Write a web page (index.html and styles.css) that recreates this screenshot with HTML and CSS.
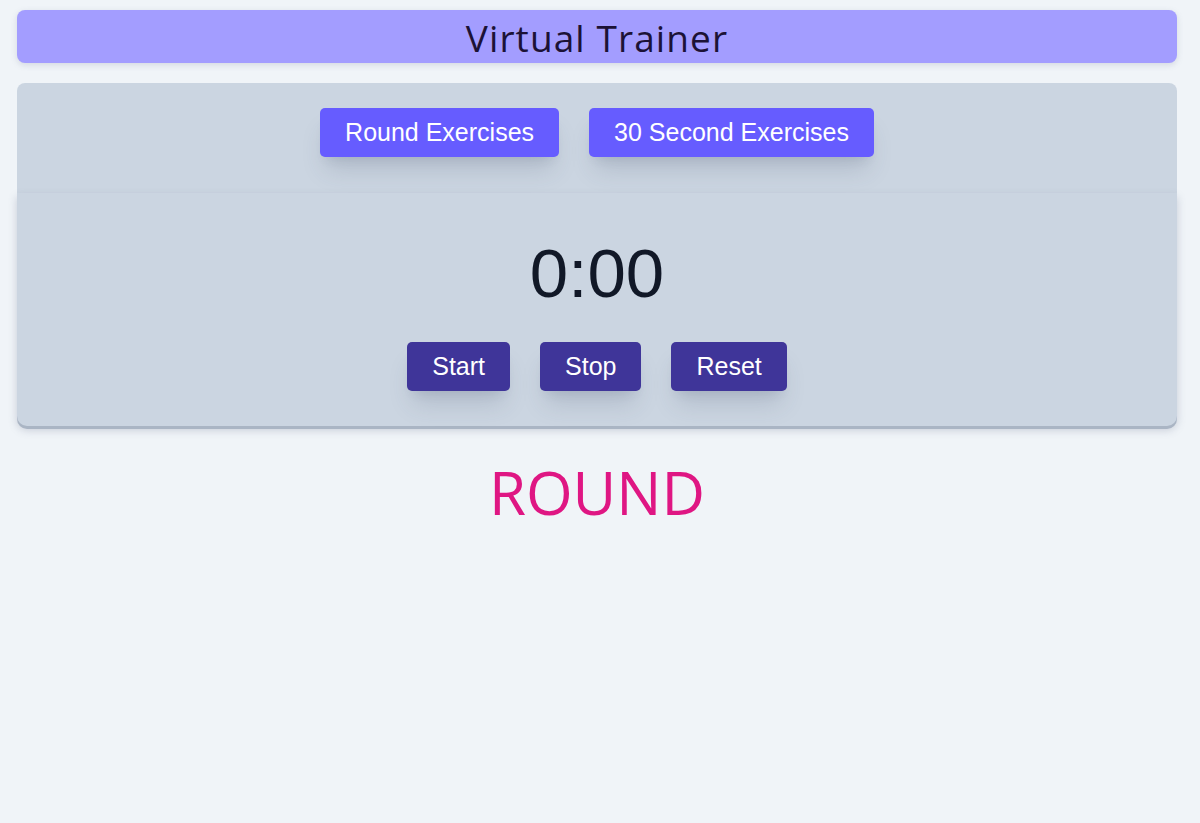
FILE: index.html
```html
<!DOCTYPE html>
<html lang="en">
<head>
<meta charset="utf-8">
<title>Virtual Trainer</title>
<link rel="stylesheet" href="styles.css">
</head>
<body>
<div class="app">
  <header class="header">
    <h1 class="title">Virtual Trainer</h1>
  </header>
  <section class="panel">
    <nav class="modes">
      <button class="btn btn-mode">Round Exercises</button>
      <button class="btn btn-mode">30 Second Exercises</button>
    </nav>
    <div class="timer-card">
      <div class="time">0:00</div>
      <div class="controls">
        <button class="btn btn-ctrl">Start</button>
        <button class="btn btn-ctrl">Stop</button>
        <button class="btn btn-ctrl">Reset</button>
      </div>
    </div>
  </section>
  <div class="round">ROUND</div>
</div>
</body>
</html>
```

FILE: styles.css
```css
* { box-sizing: border-box; }
html, body { margin: 0; padding: 0; }
body {
  background: #f0f4f8;
  font-family: "Liberation Sans", Arial, sans-serif;
}
.app {
  padding: 10px 23px 0 17px;
  display: flex;
  flex-direction: column;
}
.header {
  height: 53px;
  background: #a39dff;
  border-radius: 8px;
  box-shadow: 0 2px 6px rgba(100, 110, 140, 0.2);
  display: flex;
  align-items: center;
  justify-content: center;
}
.title {
  margin: 0;
  font-family: "Open Sans", sans-serif;
  font-weight: 400;
  font-size: 37px;
  letter-spacing: 1.1px;
  line-height: 1;
  color: #1c1236;
  transform: translateY(1px);
}
.panel {
  margin-top: 20px;
  display: flex;
  flex-direction: column;
}
.modes {
  background: #cbd5e1;
  border-radius: 8px 8px 0 0;
  padding: 25px 0 36px;
  display: flex;
  justify-content: center;
  gap: 30px;
}
.btn {
  border: none;
  border-radius: 5px;
  color: #fff;
  font-family: "Liberation Sans", Arial, sans-serif;
  font-size: 25px;
  height: 49px;
  padding: 0 25px;
  box-shadow: 0 18px 25px -6px rgba(60, 70, 100, 0.18), 0 8px 10px -6px rgba(60, 70, 100, 0.12);
  cursor: pointer;
}
.btn-mode { background: #665cff; }
.btn-ctrl { background: #3f3599; }
.timer-card {
  background: #cbd5e1;
  border-radius: 0 0 10px 10px;
  box-shadow: 0 3px 0 #aab5c4, 0 4px 8px rgba(100, 110, 140, 0.3);
  padding: 28px 0 35px;
  display: flex;
  flex-direction: column;
  align-items: center;
}
.time {
  font-family: "Liberation Sans", Arial, sans-serif;
  font-size: 69px;
  line-height: 100px;
  color: #111827;
  transform: translateY(3px);
}
.controls {
  margin-top: 21px;
  display: flex;
  justify-content: center;
  gap: 30px;
}
.round {
  margin-top: 26px;
  text-align: center;
  font-family: "Open Sans", sans-serif;
  font-size: 60px;
  line-height: 80px;
  color: #df1683;
}
```
